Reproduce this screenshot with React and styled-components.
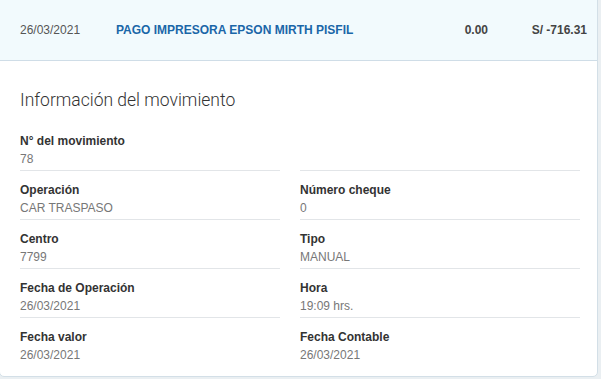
import styled, { createGlobalStyle } from 'styled-components';

const GlobalStyle = createGlobalStyle`
  html, body {
    margin: 0;
    padding: 0;
    background: #eaeff2;
  }
  body {
    font-family: "Liberation Sans", Arial, sans-serif;
  }
`;

const Page = styled.div`
  width: 601px;
  height: 379px;
  overflow: hidden;
`;

const Card = styled.section`
  width: 597px;
  height: 376px;
  margin: -1px 0 0 -1px;
  background: #fff;
  border: 1px solid #d3dfe7;
  border-radius: 0 0 5px 5px;
  box-sizing: content-box;
  overflow: hidden;
`;

const Header = styled.div`
  height: 60px;
  display: flex;
  align-items: center;
  padding: 0 10px 0 20px;
  background: #f2fafd;
  border-bottom: 1px solid #cfdde7;
  font-size: 12px;
  font-weight: bold;
`;

const HeaderDate = styled.span`
  width: 96px;
  color: #555;
  font-weight: normal;
`;

const HeaderTitle = styled.span`
  flex: 1;
  color: #1a66a8;
`;

const Amount = styled.span`
  color: #444;
  text-align: right;
  width: ${({ $w }) => $w}px;
`;

const Body = styled.div`
  padding: 28px 20px 0 20px;
`;

const Title = styled.h2`
  margin: 0 0 11px;
  font-family: Roboto, "Liberation Sans", sans-serif;
  font-weight: 300;
  font-size: 17.5px;
  line-height: 22px;
  color: #333;
`;

const Grid = styled.div`
  display: grid;
  grid-template-columns: 260px 280px;
  column-gap: 20px;
`;

const Field = styled.div`
  padding: 10px 0 2px;
  border-bottom: ${({ $last }) => ($last ? 'none' : '1px solid #e2e5e8')};
  font-size: 12px;
  line-height: 18px;
`;

const Label = styled.div`
  font-weight: bold;
  color: #333;
`;

const Value = styled.div`
  color: #777;
`;

const fields = [
  ['N° del movimiento', '78'],
  [null, null],
  ['Operación', 'CAR TRASPASO'],
  ['Número cheque', '0'],
  ['Centro', '7799'],
  ['Tipo', 'MANUAL'],
  ['Fecha de Operación', '26/03/2021'],
  ['Hora', '19:09 hrs.'],
  ['Fecha valor', '26/03/2021'],
  ['Fecha Contable', '26/03/2021'],
];

export default function App() {
  return (
    <Page>
      <GlobalStyle />
      <Card>
        <Header>
          <HeaderDate>26/03/2021</HeaderDate>
          <HeaderTitle>PAGO IMPRESORA EPSON MIRTH PISFIL</HeaderTitle>
          <Amount $w={40}>0.00</Amount>
          <Amount $w={99}>S/ -716.31</Amount>
        </Header>
        <Body>
          <Title>Información del movimiento</Title>
          <Grid>
            {fields.map(([label, value], i) => (
              <Field key={i} $last={i >= fields.length - 2}>
                {label && <Label>{label}</Label>}
                {value && <Value>{value}</Value>}
              </Field>
            ))}
          </Grid>
        </Body>
      </Card>
    </Page>
  );
}
